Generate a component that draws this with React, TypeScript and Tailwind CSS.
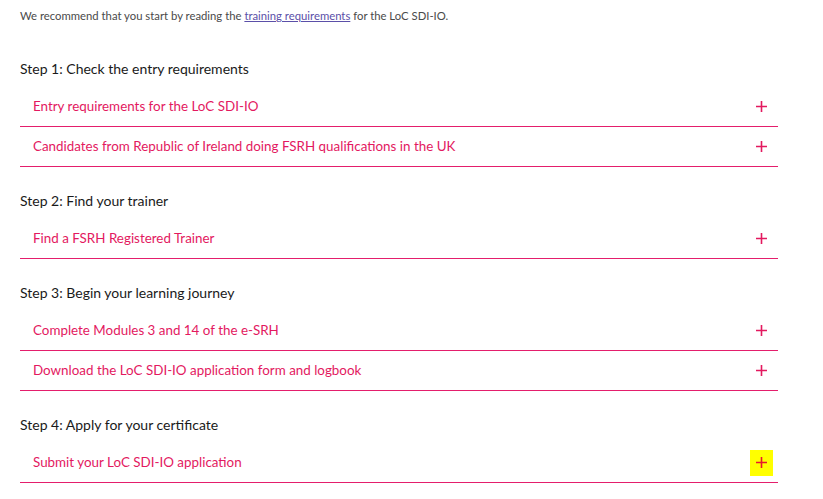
interface Step {
  title: string;
  items: string[];
}

const steps: Step[] = [
  {
    title: 'Step 1: Check the entry requirements',
    items: [
      'Entry requirements for the LoC SDI-IO',
      'Candidates from Republic of Ireland doing FSRH qualifications in the UK',
    ],
  },
  {
    title: 'Step 2: Find your trainer',
    items: ['Find a FSRH Registered Trainer'],
  },
  {
    title: 'Step 3: Begin your learning journey',
    items: [
      'Complete Modules 3 and 14 of the e-SRH',
      'Download the LoC SDI-IO application form and logbook',
    ],
  },
  {
    title: 'Step 4: Apply for your certificate',
    items: ['Submit your LoC SDI-IO application'],
  },
];

function PlusIcon() {
  return (
    <svg width="11" height="11" viewBox="0 0 11 11" fill="none">
      <path d="M5.5 0v11M0 5.5h11" stroke="currentColor" strokeWidth="1.6" />
    </svg>
  );
}

export default function App() {
  return (
    <div
      className="min-h-screen bg-white pl-5 pr-[45px] pt-[9px]"
      style={{ fontFamily: 'Lato, "Noto Sans", sans-serif' }}
    >
      <p className="text-[11.3px] leading-[14px] text-[#4a4a4a]">
        We recommend that you start by reading the{' '}
        <a href="#" className="text-[#5b4fa8] underline">
          training requirements
        </a>{' '}
        for the LoC SDI-IO.
      </p>

      <div className="mt-[36px] flex flex-col gap-[24px]">
        {steps.map((step, si) => (
          <section key={step.title}>
            <h2 className="text-[14px] leading-[20px] text-[#1a1a1a]">
              {step.title}
            </h2>
            <div className="mt-2">
              {step.items.map((item, ii) => {
                const highlight = si === steps.length - 1 && ii === 0;
                return (
                  <div
                    key={item}
                    className="flex h-[40px] items-center justify-between border-b border-[#e41e6c] pl-[13px] pr-[5px]"
                  >
                    <span className="text-[13.4px] text-[#e3195f]">{item}</span>
                    <span
                      className={
                        highlight
                          ? 'flex h-[26px] w-[23px] items-center justify-center bg-[#ffff00] text-[#e8192c]'
                          : 'flex h-[26px] w-[23px] items-center justify-center text-[#e3195f]'
                      }
                    >
                      <PlusIcon />
                    </span>
                  </div>
                );
              })}
            </div>
          </section>
        ))}
      </div>
    </div>
  );
}
